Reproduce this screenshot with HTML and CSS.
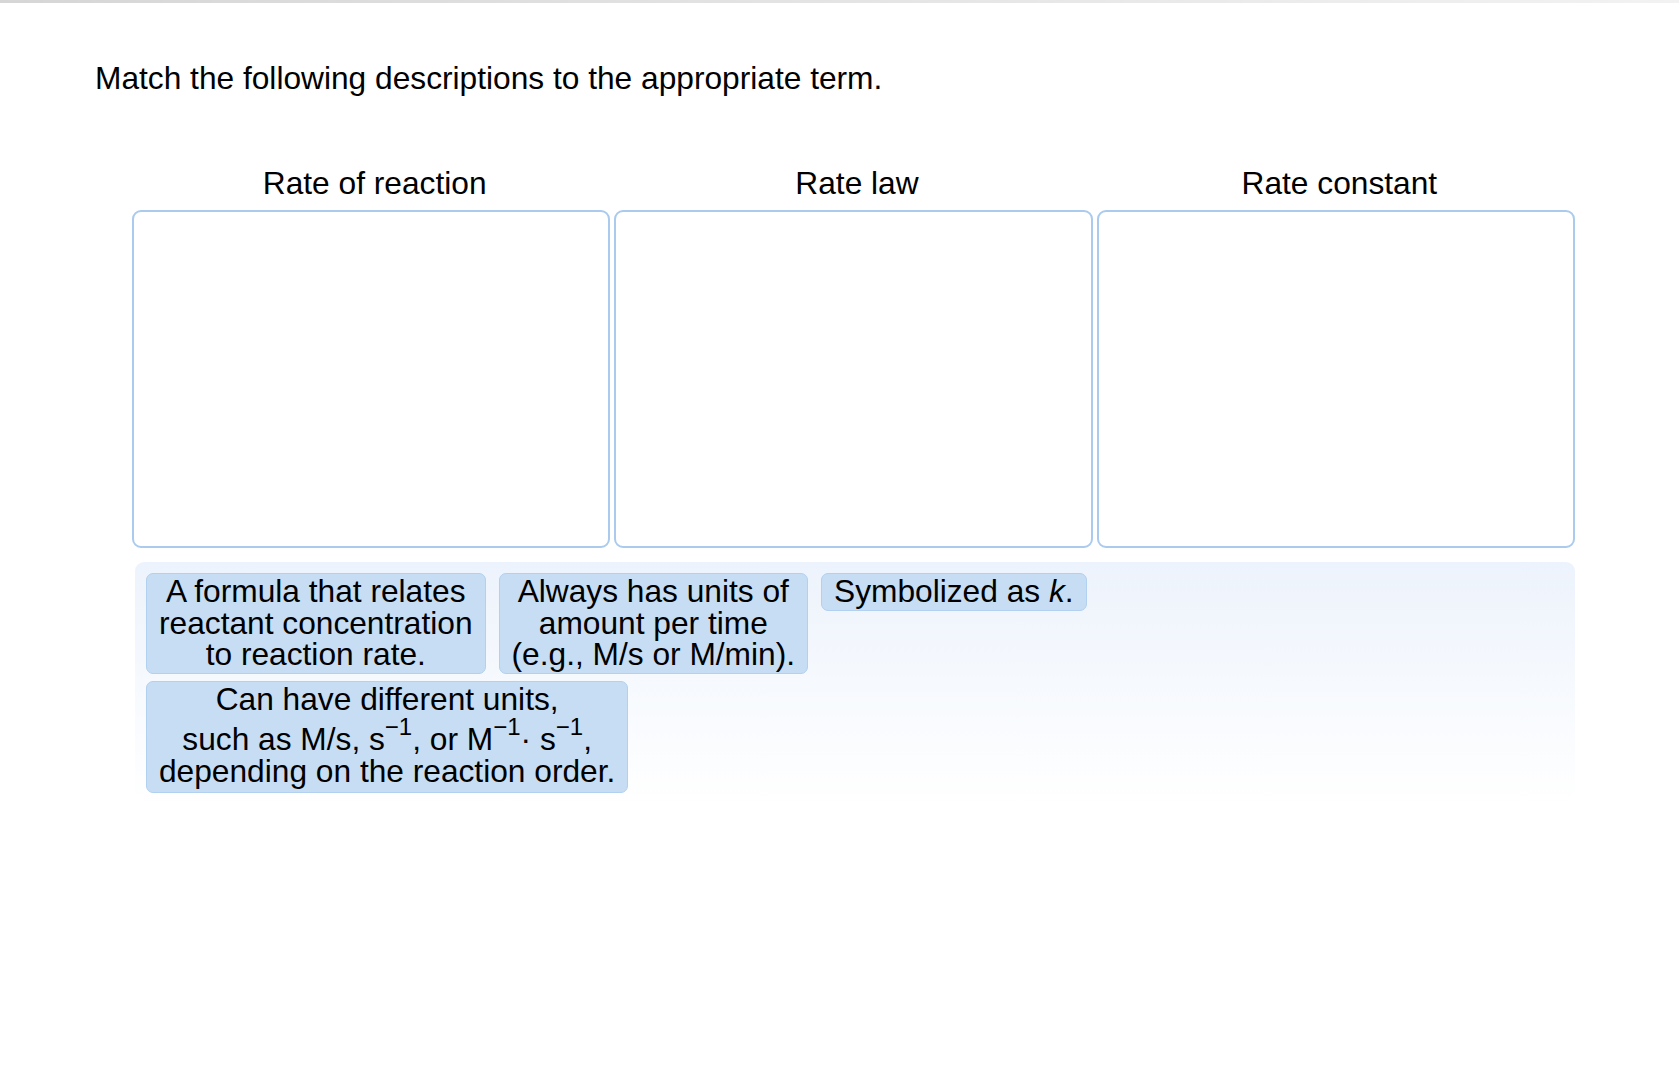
FILE: index.html
```html
<!DOCTYPE html>
<html>
<head>
<meta charset="utf-8">
<link rel="stylesheet" href="styles.css">
</head>
<body>
<div class="topbar"></div>
<main class="page">
  <p class="prompt">Match the following descriptions to the appropriate term.</p>
  <section class="matcher">
    <div class="targets">
      <div class="target">
        <div class="target-label">Rate of reaction</div>
        <div class="dropzone"></div>
      </div>
      <div class="target">
        <div class="target-label">Rate law</div>
        <div class="dropzone"></div>
      </div>
      <div class="target">
        <div class="target-label">Rate constant</div>
        <div class="dropzone"></div>
      </div>
    </div>
    <div class="palette">
      <div class="chip">A formula that relates<br>reactant concentration<br>to reaction rate.</div>
      <div class="chip">Always has units of<br>amount per time<br>(e.g., M/s or M/min).</div>
      <div class="chip">Symbolized as <i>k</i>.</div>
      <div class="chip chip-tall">
        <span class="chip-line">Can have different units,</span>
        <span class="chip-line chip-line-sup">such as M/s, s<sup>−1</sup>, or M<sup>−1</sup>· s<sup>−1</sup>,</span>
        <span class="chip-line">depending on the reaction order.</span>
      </div>
    </div>
  </section>
</main>
</body>
</html>
```

FILE: styles.css
```css
html, body {
  margin: 0;
  padding: 0;
  background: #ffffff;
}

body {
  font-family: "Liberation Sans", Arial, Helvetica, sans-serif;
  color: #000;
  font-size: 31.7px;
}

.topbar {
  height: 3px;
  background: linear-gradient(to right, #d6d6d6, #e4e4e4 50%, #f2f2f2);
}

.page {
  padding-left: 95px;
}

.prompt {
  margin: 0;
  padding-top: 57px;
  line-height: 37px;
}

.matcher {
  margin-left: 37px;
  margin-top: 68px;
  width: 1443px;
}

.targets {
  display: grid;
  grid-template-columns: repeat(3, 1fr);
  column-gap: 4px;
}

.target {
  display: flex;
  flex-direction: column;
}

.target-label {
  text-align: center;
  line-height: 37px;
  margin-bottom: 8px;
  padding-left: 7px;
}

.dropzone {
  height: 334px;
  border: 2px solid #aacbee;
  border-radius: 9px;
  background: #fff;
}

.palette {
  margin-top: 14px;
  margin-left: 3px;
  width: 1418px;
  padding: 11px 11px 12px 11px;
  border-radius: 9px;
  background: linear-gradient(to bottom, #edf3fc, #ffffff);
  display: flex;
  flex-wrap: wrap;
  align-items: flex-start;
  column-gap: 13px;
  row-gap: 7px;
}

.chip {
  background: #c6ddf4;
  border: 1px solid #b2d0ef;
  border-radius: 7px;
  padding: 2px 12px 2px 12px;
  text-align: center;
  line-height: 31.6px;
  white-space: nowrap;
}

.chip-tall {
  padding-bottom: 4px;
}

.chip-line {
  display: block;
}

.chip-line-sup {
  padding-top: 9px;
}

.chip sup {
  font-size: 24px;
  line-height: 0;
  vertical-align: 15px;
}
```
